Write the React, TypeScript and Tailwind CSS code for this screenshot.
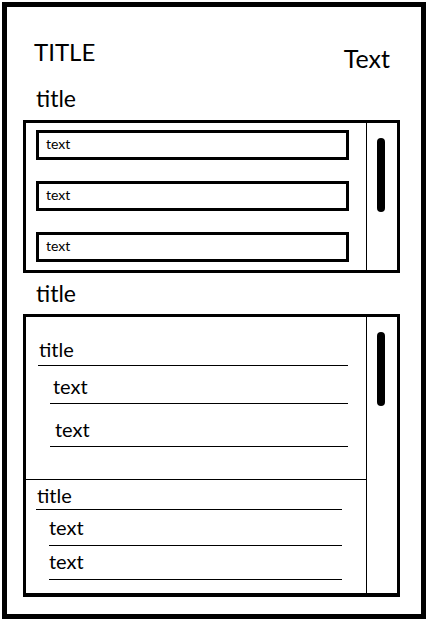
const font = { fontFamily: "Lato, 'Open Sans', sans-serif" };

function ScrollTrack({ thumbTop }: { thumbTop: string }) {
  return (
    <div className="w-[30px] shrink-0">
      <div className={`ml-[10px] h-[74px] w-[8px] rounded-full bg-black ${thumbTop}`} />
    </div>
  );
}

function Row({
  label,
  h,
  pb,
  ml,
  w,
  pl,
}: {
  label: string;
  h: string;
  pb: string;
  ml: string;
  w: string;
  pl: string;
}) {
  return (
    <div className={`flex items-end border-b border-black ${h} ${pb} ${ml} ${w} ${pl}`}>
      <span className="text-[20px] leading-[20px]">{label}</span>
    </div>
  );
}

export default function App() {
  return (
    <div className="h-[626px] w-[437px] overflow-hidden bg-white text-black" style={font}>
      <div className="ml-[2px] mt-[2px] h-[617px] w-[424px] border-[5px] border-black">
        {/* header */}
        <div className="flex h-[64px] items-start justify-between pl-[27px] pr-[31px] pt-[33px]">
          <h1 className="text-[24px] leading-[24px]">TITLE</h1>
          <span className="mt-[6px] text-[25px] leading-[25px]">Text</span>
        </div>

        <div className="pl-[16px]">
          <h2 className="mt-[16px] pl-[13px] text-[23px] leading-[23px]">title</h2>

          {/* first list */}
          <div className="mt-[10px] flex h-[153px] w-[377px] border-[3px] border-black">
            <div className="flex w-[341px] flex-col gap-[21px] border-r border-black pl-[10px] pt-[7px]">
              {["text", "text", "text"].map((t, i) => (
                <div
                  key={i}
                  className="flex h-[30px] w-[313px] items-center border-[3px] border-black pb-[3px] pl-[7px] text-[14px]"
                >
                  {t}
                </div>
              ))}
            </div>
            <ScrollTrack thumbTop="mt-[15px]" />
          </div>

          <h2 className="mt-[9px] pl-[13px] text-[23px] leading-[23px]">title</h2>

          {/* grouped list */}
          <div className="mt-[9px] flex h-[283px] w-[377px] border-[3px] border-b-[4px] border-black">
            <div className="w-[341px] border-r border-black">
              <div className="h-[163px] border-b border-black">
                <Row label="title" h="h-[49px]" pb="pb-[6px]" ml="ml-[12px]" w="w-[310px]" pl="pl-[1px]" />
                <Row label="text" h="h-[38px]" pb="pb-[7px]" ml="ml-[24px]" w="w-[298px]" pl="pl-[3px]" />
                <Row label="text" h="h-[43px]" pb="pb-[7px]" ml="ml-[24px]" w="w-[298px]" pl="pl-[5px]" />
              </div>
              <Row label="title" h="h-[30px]" pb="pb-[4px]" ml="ml-[10px]" w="w-[306px]" pl="pl-[1px]" />
              <Row label="text" h="h-[36px]" pb="pb-[8px]" ml="ml-[23px]" w="w-[293px]" pl="pl-[0px]" />
              <Row label="text" h="h-[34px]" pb="pb-[8px]" ml="ml-[23px]" w="w-[293px]" pl="pl-[0px]" />
            </div>
            <ScrollTrack thumbTop="mt-[15px]" />
          </div>
        </div>
      </div>
    </div>
  );
}
